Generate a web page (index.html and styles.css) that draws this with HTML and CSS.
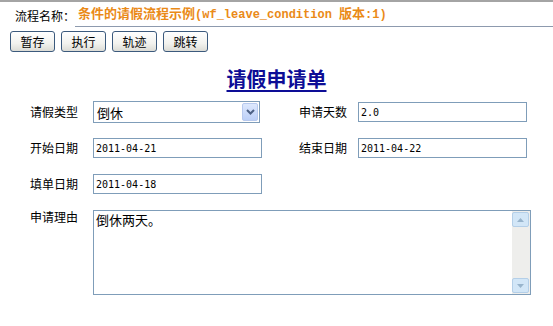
FILE: index.html
```html
<!DOCTYPE html>
<html lang="zh-CN">
<head>
  <meta charset="UTF-8" />
  <title>请假申请单</title>
  <link rel="stylesheet" href="styles.css">
</head>
<body>
  <div class="topbar"></div>

  <div class="flow-head">
    <span class="flow-label">流程名称：</span>
    <span class="flow-name">条件的请假流程示例<span class="latin">(wf_leave_condition </span>版本<span class="latin">:1)</span></span>
  </div>

  <div class="toolbar">
    <button class="btn">暂存</button>
    <button class="btn">执行</button>
    <button class="btn">轨迹</button>
    <button class="btn">跳转</button>
  </div>

  <h1 class="form-title"><span>请假申请单</span></h1>

  <div class="form-grid">
    <label class="lbl">请假类型</label>
    <div class="field">
      <div class="select-wrap">
        <select class="select">
          <option>倒休</option>
          <option>事假</option>
          <option>病假</option>
        </select>
        <span class="select-arrow">
          <svg width="9" height="6" viewBox="0 0 9 6"><path d="M1 1 L4.5 4.5 L8 1" fill="none" stroke="#4d6185" stroke-width="2"/></svg>
        </span>
      </div>
    </div>
    <label class="lbl">申请天数</label>
    <div class="field"><input class="text" type="text" value="2.0"></div>

    <label class="lbl">开始日期</label>
    <div class="field"><input class="text" type="text" value="2011-04-21"></div>
    <label class="lbl">结束日期</label>
    <div class="field"><input class="text" type="text" value="2011-04-22"></div>

    <label class="lbl">填单日期</label>
    <div class="field"><input class="text" type="text" value="2011-04-18"></div>
    <div></div>
    <div></div>

    <label class="lbl lbl-top">申请理由</label>
    <div class="field field-wide">
      <div class="area-box">
        <textarea class="area">倒休两天。</textarea>
        <div class="vscroll">
          <span class="sb-btn"><svg width="7" height="4" viewBox="0 0 7 4"><path d="M0 4 L3.5 0 L7 4 Z" fill="#98b4cc"/></svg></span>
          <span class="sb-track"></span>
          <span class="sb-btn"><svg width="7" height="4" viewBox="0 0 7 4"><path d="M0 0 L3.5 4 L7 0 Z" fill="#98b4cc"/></svg></span>
        </div>
      </div>
    </div>
  </div>
</body>
</html>
```

FILE: styles.css
```css
body { margin: 0; font: 12px/1 "Noto Sans CJK SC", sans-serif; color: #000; background: #fff; }

.topbar { height: 2px; background: #a4a4a4; }

.flow-head { display: flex; align-items: flex-end; height: 25px; padding-left: 15px; }
.flow-label { line-height: 20px; padding-bottom: 1px; }
.flow-name { flex: 1; padding-left: 3px; line-height: 20px; padding-bottom: 1px;
  border-bottom: 1px solid #8d9aae; color: #ea8a17; font-weight: bold; font-size: 13px; }
.flow-name .latin { font-family: "Liberation Mono", monospace; font-size: 12px; }

.toolbar { display: flex; gap: 6px; padding: 4px 10px 0; }
.btn { width: 45px; height: 21px; padding: 0; font: 12px/1 "Noto Sans CJK SC", sans-serif; color: #000;
  border: 1px solid #3c5a7d; border-radius: 3px;
  background: linear-gradient(#ffffff, #f2f2ee 60%, #dcdcd6); }

.form-title { margin: 14px 0 0; text-align: center; font-size: 20px; line-height: 26px; height: 28px;
  color: #0d0d96; font-weight: bold; }
.form-title span { text-decoration: underline; text-underline-offset: 3px; text-decoration-thickness: 2px; }

.form-grid { display: grid; grid-template-columns: 63px 206px 59px 169px;
  grid-template-rows: 36px 36px 36px 100px; padding-left: 30px; align-items: center; }
.lbl { line-height: 14px; }
.lbl-top { align-self: start; padding-top: 8px; }
.field-wide { grid-column: 2 / 5; align-self: start; padding-top: 8px; }

.text { box-sizing: border-box; width: 169px; height: 20px; margin: 0; padding: 1px 2px;
  border: 1px solid #7f9db9; font: 10px "DejaVu Sans Mono", monospace; color: #000; outline: none; }

.select-wrap { position: relative; width: 167px; height: 22px; }
.select { box-sizing: border-box; width: 100%; height: 100%; margin: 0; padding: 0 3px;
  border: 1px solid #7f9db9; border-radius: 0; background: #fff; appearance: none; -webkit-appearance: none;
  font: 13px "Noto Sans CJK SC", sans-serif; color: #000; }
.select-arrow { position: absolute; right: 2px; top: 2px; width: 16px; height: 18px; box-sizing: border-box;
  display: flex; align-items: center; justify-content: center; pointer-events: none;
  border: 1px solid #b7c9ee; border-radius: 2px; background: linear-gradient(#dde8fd, #bccff7); }

.area-box { display: flex; box-sizing: border-box; width: 438px; height: 85px; border: 1px solid #7f9db9; background: #fff; }
.area { flex: 1; margin: 0; padding: 1px 2px; border: 0; resize: none; overflow: hidden; outline: none;
  font: 13px/16px "Noto Sans CJK SC", sans-serif; color: #000; }
.vscroll { display: flex; flex-direction: column; width: 17px; padding: 1px 1px 1px 0; background: #eeeeec; }
.sb-btn { box-sizing: border-box; height: 15px; display: flex; align-items: center; justify-content: center;
  border: 1px solid #b4cfe8; border-radius: 2px; background: #d2e6f7; }
.sb-track { flex: 1; }
```
